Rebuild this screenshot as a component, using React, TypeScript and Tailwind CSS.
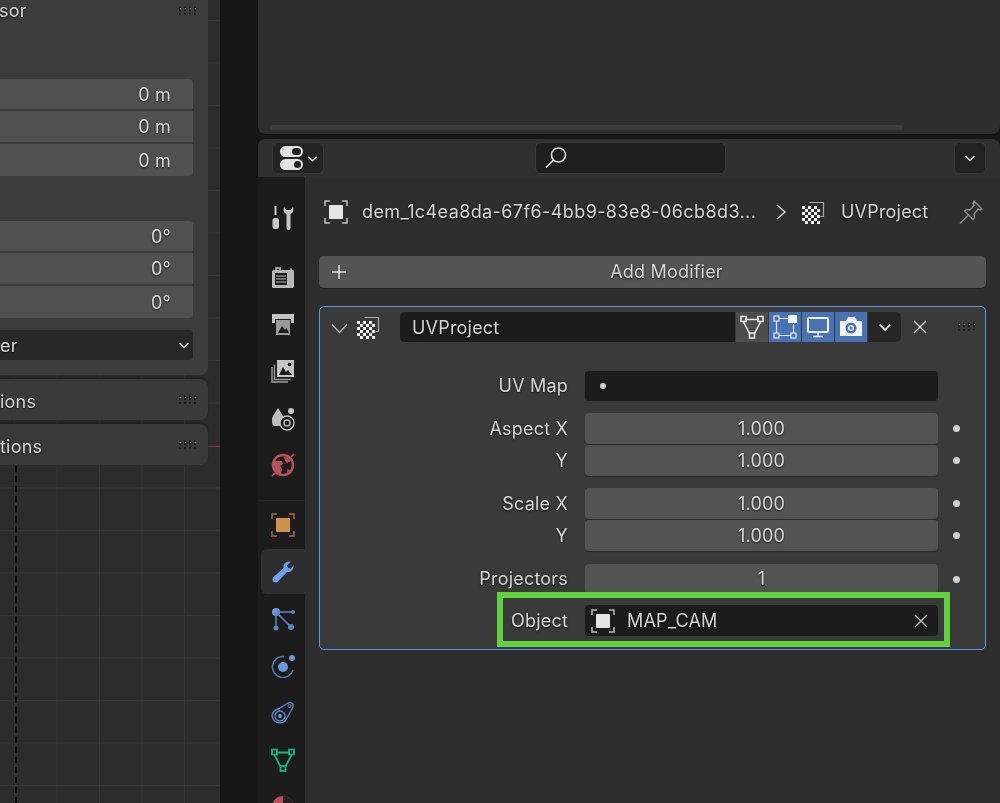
import { ReactNode } from 'react';

const text = 'text-[#d6d6d6] [text-shadow:0_1px_2px_rgba(0,0,0,0.7)]';

function Grip() {
  return (
    <svg width="18" height="10" viewBox="0 0 18 10" className="shrink-0">
      {[1, 6, 11, 16].map((x) =>
        [1.5, 4.5, 8].map((y) => (
          <rect key={`${x}-${y}`} x={x - 1} y={y - 1} width="1.6" height="1.6" fill="#151515" />
        ))
      )}
      {[1, 6, 11, 16].map((x) => (
        <rect key={x} x={x} y={2} width="1" height="1" fill="#777" />
      ))}
    </svg>
  );
}

function Chevron({ size = 12, color = '#d8d8d8' }: { size?: number; color?: string }) {
  return (
    <svg width={size} height={size} viewBox="0 0 12 12" fill="none" stroke={color} strokeWidth="1.5">
      <path d="M1.5 4l4.5 4.5L10.5 4" />
    </svg>
  );
}

function Cross({ size = 14, color = '#d8d8d8' }: { size?: number; color?: string }) {
  return (
    <svg width={size} height={size} viewBox="0 0 14 14" fill="none" stroke={color} strokeWidth="1.4">
      <path d="M1 1l12 12M13 1L1 13" />
    </svg>
  );
}

function ObjectIcon({ size = 24, color = '#e4e4e4', frame = '#bdbdbd' }: { size?: number; color?: string; frame?: string }) {
  return (
    <svg width={size} height={size} viewBox="0 0 24 24" fill="none">
      <path d="M1 6V1h5M18 1h5v5M23 18v5h-5M6 23H1v-5" stroke={frame} strokeWidth="1.5" />
      <rect x="5" y="5" width="14" height="14" rx="1" fill={color} />
    </svg>
  );
}

function UvIcon() {
  const cells = [];
  for (let r = 0; r < 6; r++) {
    for (let c = 0; c < 6; c++) {
      if ((r + c) % 2 === 0) cells.push(<rect key={`${r}${c}`} x={c * 3} y={6 + r * 3} width="3" height="3" fill="#f0f0f0" />);
    }
  }
  return (
    <svg width="24" height="24" viewBox="0 0 24 24" fill="none">
      <path d="M7.5 2.5h14v14h-3" stroke="#aaa" strokeWidth="1.2" />
      {cells}
    </svg>
  );
}

function Tab({ children, h = 47, active = false }: { children: ReactNode; h?: number; active?: boolean }) {
  return (
    <div
      className={`flex items-center justify-center ml-[3px] rounded-l-md ${active ? 'bg-[#2e2e2e]' : ''}`}
      style={{ height: h }}
    >
      {children}
    </div>
  );
}

function Tabs() {
  return (
    <div className="w-[47px] shrink-0 bg-[#1c1c1c] pt-[17px] overflow-hidden">
      {/* tool */}
      <Tab h={46}>
        <svg width="26" height="26" viewBox="0 0 26 26" fill="#c8c8c8">
          <rect x="4.5" y="2" width="2" height="9" />
          <rect x="2.5" y="14" width="6.5" height="11" rx="2.5" />
          <path d="M14 3c-1 3 0 6 2.5 7v14a2 2 0 0 0 4 0V10c2.500-1 3.500-4 2.500-7l-2.500 3h-4z" />
        </svg>
      </Tab>
      <div className="h-[13px]" />
      {/* render */}
      <Tab>
        <svg width="24" height="24" viewBox="0 0 24 24" fill="none">
          <path d="M5 5V3h4v2M20 3.500v1.500" stroke="#bbb" strokeWidth="1.500" />
          <rect x="1" y="5" width="22" height="18" rx="1.500" fill="#b8b8b8" />
          <rect x="4" y="8" width="12" height="12" fill="#1c1c1c" />
          <path d="M5 11h10M5 14h10M5 17h10" stroke="#b8b8b8" strokeWidth="1" />
        </svg>
      </Tab>
      {/* output */}
      <Tab>
        <svg width="24" height="24" viewBox="0 0 24 24" fill="none">
          <path d="M1 2h22v9h-3V7H4v4H1z" fill="#c4c4c4" />
          <rect x="5" y="8" width="14" height="15" fill="#9a9a9a" />
          <path d="M7 21l4-7 3 4 1.500-2L18 21z" fill="#1c1c1c" />
        </svg>
      </Tab>
      {/* view layer */}
      <Tab>
        <svg width="24" height="24" viewBox="0 0 24 24" fill="none">
          <path d="M1 8v15h16M3.500 5.500v15h16" stroke="#9c9c9c" strokeWidth="1.400" />
          <rect x="6" y="1" width="17" height="17" fill="#c4c4c4" />
          <path d="M8 16l4-8 3 5 2-2 4 5z" fill="#1c1c1c" />
          <circle cx="18.500" cy="5.500" r="1.800" fill="#1c1c1c" />
        </svg>
      </Tab>
      {/* scene */}
      <Tab>
        <svg width="24" height="26" viewBox="0 0 24 26" fill="none">
          <path d="M7 3c3 5 6 8 6 12 0 3-1 5-2 6H3c-2-2-2-4-2-6 0-4 3-7 6-12z" fill="#bcbcbc" />
          <circle cx="20" cy="6" r="3" fill="#c8c8c8" />
          <circle cx="16" cy="18" r="7" fill="#1c1c1c" stroke="#bcbcbc" strokeWidth="1.500" />
          <circle cx="16" cy="18" r="3" stroke="#bcbcbc" strokeWidth="1.500" />
        </svg>
      </Tab>
      {/* world */}
      <Tab>
        <svg width="24" height="24" viewBox="0 0 24 24" fill="none">
          <circle cx="12" cy="12" r="10" fill="#1c1c1c" stroke="#b9515c" strokeWidth="2.500" />
          <path d="M3 8h8l1 3-3 2 2 3-1 5c-4-1-7-5-7-10zM13 4c3 0 6 2 7 4l-4 2-2-2z" fill="#b9515c" />
          <path d="M17 17l3 2-3 2zM1 23l3-3M23 1l-3 3" stroke="#b9515c" strokeWidth="1.500" />
        </svg>
      </Tab>
      <div className="h-[13px] border-b border-[#262626]" />
      <div className="h-[11px]" />
      {/* object */}
      <Tab h={25}>
        <ObjectIcon color="#cf9150" frame="#a86d35" />
      </Tab>
      <div className="h-[12px]" />
      {/* modifiers */}
      <Tab active h={45}>
        <svg width="24" height="24" viewBox="0 0 24 24" fill="#6f9fe8">
          <path d="M22.500 6.500c0 3.500-3 6-6.500 5.500L7 21.500c-2 2-6 .5-5.500-2.500 0-1 .5-1.500 1-2L12.500 8C12 4.500 14.500 1.500 18 1.500l2 .3-4 3.500 1 2.700 2.700.8L23 5z" />
        </svg>
      </Tab>
      <div className="h-[1px]" />
      {/* particles */}
      <Tab>
        <svg width="24" height="24" viewBox="0 0 24 24" fill="#5a82c4" stroke="#5a82c4">
          <circle cx="5" cy="5" r="4" stroke="none" fill="#6c96da" />
          <circle cx="22" cy="5" r="2" stroke="none" />
          <circle cx="5" cy="21" r="2.500" stroke="none" />
          <circle cx="20" cy="20" r="3" stroke="none" />
          <path d="M5 5h17M5 5v16M5 5l15 15" strokeWidth="1.500" fill="none" />
        </svg>
      </Tab>
      {/* physics */}
      <Tab>
        <svg width="24" height="24" viewBox="0 0 24 24" fill="none">
          <path d="M13 2.500A10.500 10.500 0 1 0 22 16" stroke="#5078b8" strokeWidth="1.500" />
          <circle cx="12" cy="13" r="5" fill="#6c96da" />
          <circle cx="21" cy="4" r="3" fill="#6c96da" />
        </svg>
      </Tab>
      {/* constraints */}
      <Tab>
        <svg width="24" height="24" viewBox="0 0 24 24" fill="none" stroke="#5f86c6">
          <path d="M19 1.500c2.500 0 4 2.500 3 4.500l-6 11c-2 4-6 5.500-10 4.500C2 20 .5 16 1.500 13 2.500 10 5 8.500 8 7.500L17 2c.7-.3 1.300-.5 2-.5z" strokeWidth="1.400" />
          <circle cx="9" cy="15" r="5" strokeWidth="1.400" />
          <circle cx="9" cy="15" r="2" fill="#6c96da" stroke="none" />
          <circle cx="18.500" cy="5" r="1.500" strokeWidth="1" />
        </svg>
      </Tab>
      {/* data */}
      <Tab>
        <svg width="24" height="24" viewBox="0 0 24 24" fill="none" stroke="#12b585" strokeWidth="1.800">
          <path d="M5 4.500h14M3.500 7l6.500 12.500M20.500 7L14 19.500" />
          <rect x="1" y="1.500" width="5" height="5" />
          <rect x="18" y="1.500" width="5" height="5" />
          <rect x="9.500" y="18" width="5" height="5" />
        </svg>
      </Tab>
      <Tab>
        <svg width="24" height="24" viewBox="0 0 24 24">
          <circle cx="12" cy="12" r="11" fill="#b9515c" />
          <path d="M12 12V1a11 11 0 0 1 11 11z" fill="#222" />
        </svg>
      </Tab>
    </div>
  );
}

function Row({ label, value, mt = 2, h = 31, lift = true }: { label: string; value: string; mt?: number; h?: number; lift?: boolean }) {
  return (
    <div className="flex items-center" style={{ marginTop: mt }}>
      <div className={`w-[265px] pr-[17px] text-right ${lift ? 'pb-[1px]' : ''} ${text}`}>{label}</div>
      <div className={`w-[353px] bg-[#535353] rounded-[4px] flex items-center justify-center shadow-[0_1px_1px_rgba(0,0,0,0.3)] ${lift ? 'pb-[1px]' : ''} ${text}`} style={{ height: h }}>
        {value}
      </div>
      <div className="w-[7px] h-[7px] rounded-full bg-[#d0d0d0] ml-[15px]" />
    </div>
  );
}

function ToggleButton({ children, on = true }: { children: ReactNode; on?: boolean }) {
  return (
    <div className={`w-[32px] h-[30px] flex items-center justify-center ${on ? 'bg-[#4772b3]' : 'bg-[#4d4d4d]'}`}>{children}</div>
  );
}

function PropertiesEditor() {
  return (
    <div className="h-[664px] rounded-t-lg overflow-hidden flex flex-col bg-[#2e2e2e]">
      <div className="h-[38px] shrink-0 bg-[#303030] flex items-center pl-[14px] pr-[14px]">
        <div className="w-[52px] h-[32px] bg-[#232323] border border-[#383838] rounded-md flex items-center justify-center gap-[2px]">
          <svg width="26" height="26" viewBox="0 0 26 26">
            <rect x="1" y="1" width="23" height="11" rx="5.500" fill="#e2e2e2" />
            <rect x="13" y="3" width="9" height="7" rx="3.500" fill="#232323" />
            <rect x="1" y="14" width="23" height="11" rx="5.500" fill="#e2e2e2" />
            <rect x="15" y="16" width="7" height="7" rx="3.500" fill="#232323" />
          </svg>
          <Chevron size={11} />
        </div>
        <div className="ml-[211px] w-[191px] h-[32px] bg-[#1f1f1f] border border-[#3a3a3a] rounded-md flex items-center pl-[8px]">
          <svg width="24" height="24" viewBox="0 0 24 24" fill="none" stroke="#e0e0e0" strokeWidth="1.600">
            <circle cx="14.500" cy="9" r="7" />
            <path d="M9.500 14L2 21.500" />
          </svg>
        </div>
        <div className="ml-auto w-[32px] h-[32px] bg-[#232323] border border-[#383838] rounded-md flex items-center justify-center">
          <Chevron size={12} />
        </div>
      </div>
      <div className="flex-1 flex min-h-0">
        <Tabs />
        <div className="flex-1 px-[14px] min-w-0">
          {/* breadcrumb */}
          <div className={`h-[79px] flex items-center pl-[5px] pb-[10px] ${text}`}>
            <ObjectIcon />
            <span className="ml-[14px] w-[399px] whitespace-nowrap tracking-[0.4px]">dem_1c4ea8da-67f6-4bb9-83e8-06cb8d3...</span>
            <svg width="12" height="16" viewBox="0 0 12 16" fill="none" stroke="#d0d0d0" strokeWidth="1.500" className="ml-[14px]">
              <path d="M2 1l8 7-8 7" />
            </svg>
            <div className="ml-[15px]"><UvIcon /></div>
            <span className="ml-[15px]">UVProject</span>
            <svg width="26" height="26" viewBox="0 0 26 26" fill="none" stroke="#8f8f8f" strokeWidth="1.400" className="ml-auto mr-[2px]">
              <path d="M16 2l8 8-2 1-2-1-4 5c1 2 .5 4-1 5.500L6.500 12c1.500-1.500 3.500-2 5.500-1l4-4.500-1-2zM10 16.500L2 24.500" />
            </svg>
          </div>
          {/* add modifier */}
          <div className={`h-[32px] bg-[#545454] rounded-[5px] flex items-center pl-[12px] pb-[1px] shadow-[0_1px_1px_rgba(0,0,0,0.3)] ${text}`}>
            <svg width="16" height="16" viewBox="0 0 16 16" stroke="#e0e0e0" strokeWidth="1.500">
              <path d="M8 1v14M1 8h14" />
            </svg>
            <span className="flex-1 text-center">Add Modifier</span>
          </div>
          {/* modifier panel */}
          <div className="relative mt-[18px] h-[344px] border border-[#5f95ee] rounded-[5px] bg-[#3a3a3a]">
            <div className="h-[42px] flex items-center pl-[11px]">
              <svg width="17" height="11" viewBox="0 0 17 11" fill="none" stroke="#b8b8b8" strokeWidth="1.300">
                <path d="M1 1.500l7.500 8 7.500-8" />
              </svg>
              <div className="ml-[9px] -mt-[2px]"><UvIcon /></div>
              <div className={`ml-[19px] w-[335px] h-[30px] -mt-[2px] bg-[#1c1c1c] rounded-l-[5px] flex items-center pl-[12px] ${text}`}>UVProject</div>
              <div className="ml-[1px] -mt-[2px] flex gap-[1px]">
                <ToggleButton on={false}>
                  <svg width="24" height="24" viewBox="0 0 24 24" fill="none" stroke="#e8e8e8" strokeWidth="1.600">
                    <path d="M5 4.500h14M3.500 7l6.500 12.500M20.500 7L14 19.500" />
                    <rect x="1" y="1.500" width="5" height="5" />
                    <rect x="18" y="1.500" width="5" height="5" />
                    <rect x="9.500" y="18" width="5" height="5" />
                  </svg>
                </ToggleButton>
                <ToggleButton>
                  <svg width="24" height="24" viewBox="0 0 24 24" fill="none" stroke="#dfe8f5" strokeWidth="1.200">
                    <path d="M6 3.500h9M3.500 6v12M6 20.500h12M20.500 9v9" />
                    <rect x="1" y="1" width="5" height="5" />
                    <rect x="1" y="18" width="5" height="5" />
                    <rect x="18" y="18" width="5" height="5" />
                    <rect x="15" y="0" width="9" height="8" fill="#f2f2f2" stroke="none" />
                  </svg>
                </ToggleButton>
                <ToggleButton>
                  <svg width="24" height="24" viewBox="0 0 24 24" fill="none">
                    <rect x="2" y="3" width="20" height="14" rx="1" stroke="#f2f2f2" strokeWidth="2" />
                    <path d="M12 17v4M7 21.500h10" stroke="#f2f2f2" strokeWidth="1.500" />
                  </svg>
                </ToggleButton>
                <ToggleButton>
                  <svg width="24" height="24" viewBox="0 0 24 24" fill="none">
                    <path d="M1 6h6l2-4h7l2 4h5v15H1z" fill="#f2f2f2" />
                    <circle cx="12" cy="13" r="5.500" fill="#4772b3" />
                    <circle cx="12" cy="13" r="3" fill="#f2f2f2" />
                    <circle cx="12" cy="13" r="1.500" fill="#4772b3" />
                  </svg>
                </ToggleButton>
              </div>
              <div className="ml-[1px] -mt-[2px] w-[33px] h-[30px] bg-[#262626] rounded-r-[5px] flex items-center justify-center">
                <Chevron size={14} />
              </div>
              <div className="ml-[12px] -mt-[2px]"><Cross size={14} /></div>
              <div className="ml-auto mr-[9px] -mt-[2px]"><Grip /></div>
            </div>
            {/* uv map */}
            <div className="flex items-center mt-[22px]">
              <div className={`w-[265px] pr-[17px] pb-[1px] text-right ${text}`}>UV Map</div>
              <div className="w-[353px] h-[30px] bg-[#1c1c1c] rounded-[4px] flex items-center pl-[15px]">
                <div className="w-[6px] h-[6px] rounded-full bg-[#d0d0d0]" />
              </div>
            </div>
            <Row label="Aspect X" value="1.000" mt={12} h={31} />
            <Row label="Y" value="1.000" mt={1} h={31} />
            <Row label="Scale X" value="1.000" mt={12} h={31} lift={false} />
            <Row label="Y" value="1.000" mt={1} h={31} lift={false} />
            <Row label="Projectors" value="1" mt={13} h={30} />
            {/* object */}
            <div className="flex items-center mt-[11px]">
              <div className={`w-[265px] pr-[17px] text-right ${text}`}>Object</div>
              <div className={`w-[353px] h-[31px] bg-[#1c1c1c] rounded-[4px] flex items-center pl-[6px] pr-[10px] ${text}`}>
                <ObjectIcon />
                <span className="ml-[12px] flex-1">MAP_CAM</span>
                <Cross size={14} color="#c0c0c0" />
              </div>
            </div>
            {/* highlight drawn over the screenshot */}
            <div className="absolute left-[177px] top-[285px] w-[453px] h-[55px] border-[6px] border-[#5fd33f]" />
          </div>
        </div>
      </div>
    </div>
  );
}

function Field({ value, h, round = '', mt = 2 }: { value: string; h: number; round?: string; mt?: number }) {
  return (
    <div
      className={`bg-[#505050] flex items-center justify-end pr-[22px] ${round} ${text}`}
      style={{ height: h, marginTop: mt }}
    >
      {value}
    </div>
  );
}

function SubPanel({ label, mt }: { label: string; mt: number }) {
  return (
    <div
      className={`h-[41px] w-[208px] shrink-0 bg-[#3a3a3a] rounded-r-lg flex items-center justify-between pr-[11px] shadow-[0_-2px_2px_rgba(0,0,0,0.3)] ${text}`}
      style={{ marginTop: mt }}
    >
      <span className="pt-[3px]">{label}</span>
      <Grip />
    </div>
  );
}

function Viewport() {
  return (
    <div className="relative w-[220px] shrink-0 h-full overflow-hidden bg-[#2c2c2c] bg-[linear-gradient(#353535_1px,transparent_1px),linear-gradient(90deg,#353535_1px,transparent_1px)] bg-[size:42.5px_42.5px] bg-[position:14px_20px]">
      <div className="w-[208px] h-[375px] bg-[#3c3c3c] rounded-br-lg pr-[15px] pt-0">
        <div className={`h-[21px] flex items-center justify-between -mr-[4px] ${text}`}>
          <span className="-ml-[1px] leading-none">sor</span>
          <Grip />
        </div>
        <div className="pt-[58px]">
          <Field value="0 m" h={30} round="rounded-tr-[4px]" mt={0} />
          <Field value="0 m" h={31} />
          <Field value="0 m" h={32} round="rounded-br-[4px]" />
          <Field value="0°" h={30} round="rounded-tr-[4px]" mt={45} />
          <Field value="0°" h={31} />
          <Field value="0°" h={32} round="rounded-br-[4px]" />
          <div className={`h-[30px] mt-[12px] bg-[#282828] rounded-r-[4px] flex items-center justify-between pr-[3px] ${text}`}>
            <span>er</span>
            <Chevron size={12} />
          </div>
        </div>
      </div>
      <SubPanel label="ions" mt={4} />
      <SubPanel label="tions" mt={4} />
      {/* axis + cursor lines on the canvas */}
      <div className="absolute left-[208px] top-[446px] w-[12px] h-[1px] bg-[#8f2f3a]" />
      <div className="absolute left-[15px] top-[466px] bottom-0 w-[2px] border-l-2 border-dashed border-[#0a0a0a]" />
    </div>
  );
}

export default function App() {
  return (
    <div className="w-[1000px] h-[803px] overflow-hidden flex bg-[#161616] text-[18px] tracking-[0.2px] blur-[0.3px]" style={{ fontFamily: 'Inter, "Liberation Sans", sans-serif' }}>
      <Viewport />
      <div className="ml-[38px] flex-1 flex flex-col gap-[5px] min-w-0">
        <div className="h-[134px] shrink-0 bg-[#2e2e2e] rounded-b-lg flex flex-col justify-end pb-[4px] pl-[12px]">
          <div className="w-[633px] h-[5px] rounded-full bg-[#3c3c3c]" />
        </div>
        <PropertiesEditor />
      </div>
    </div>
  );
}
